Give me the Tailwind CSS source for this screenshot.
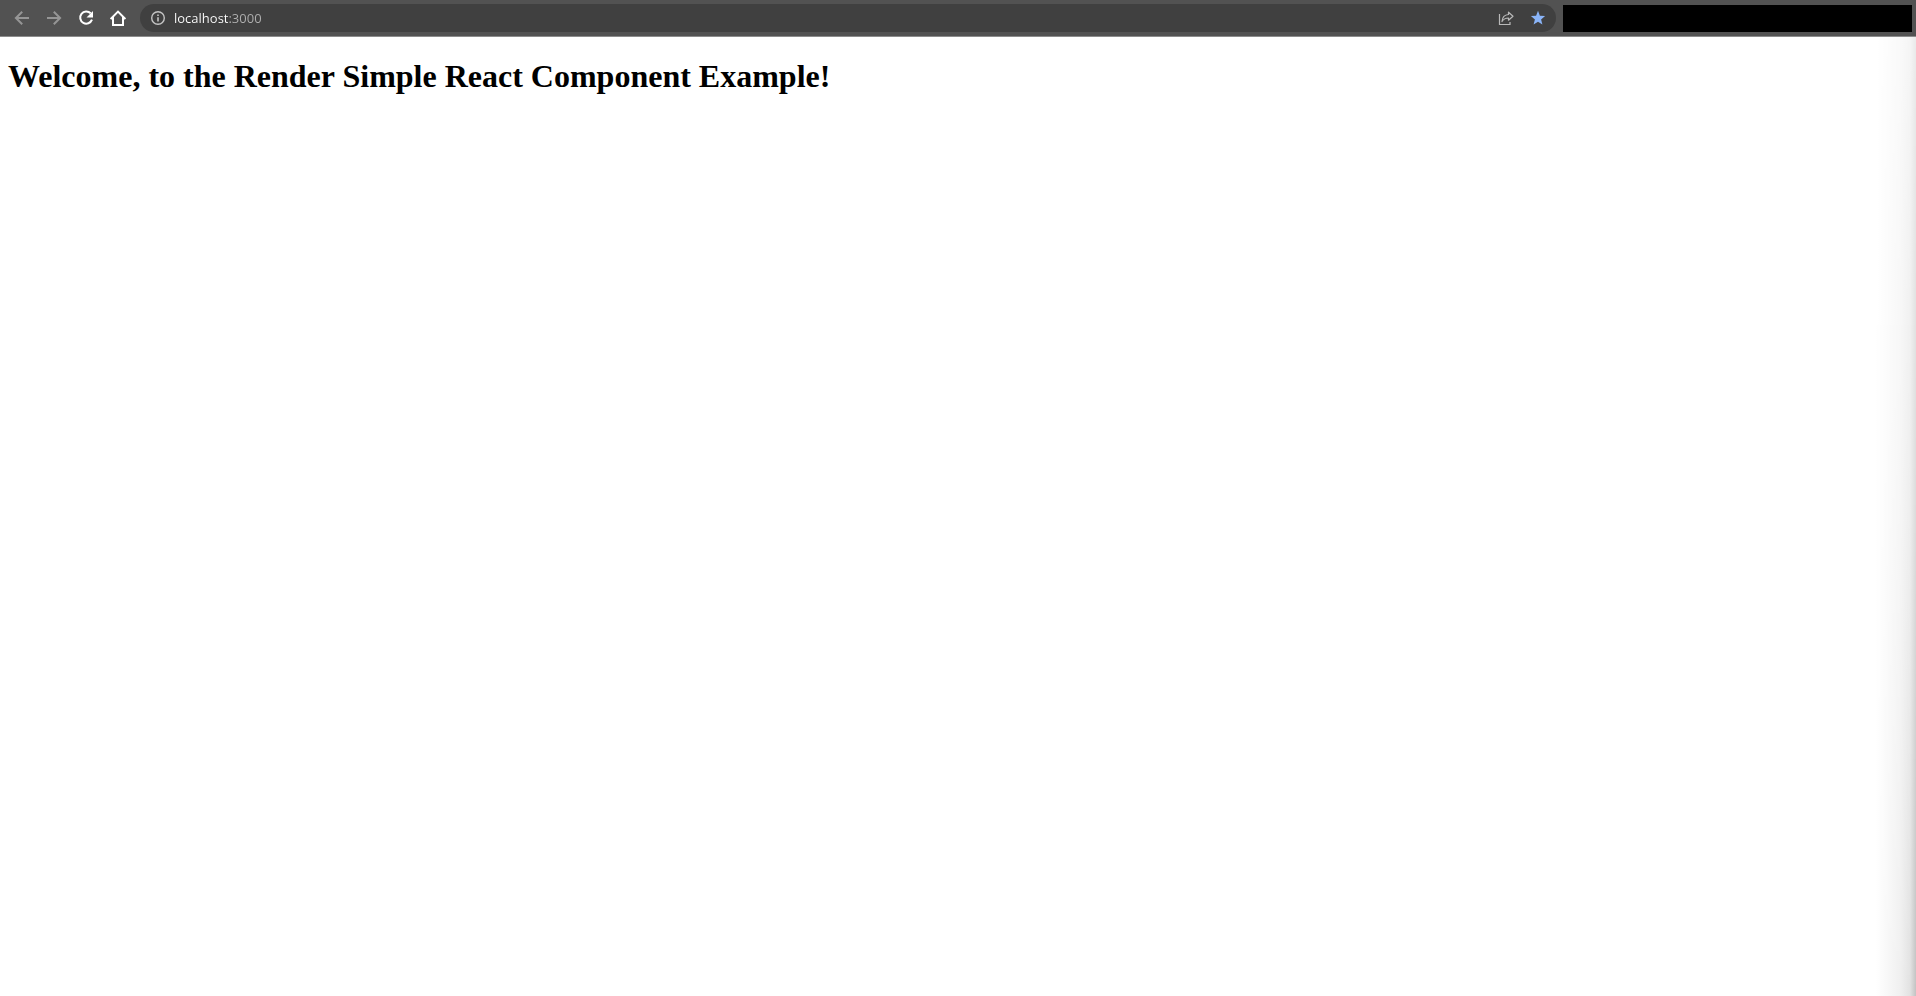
<!DOCTYPE html>
<html lang="en">
<head>
<meta charset="utf-8">
<meta name="viewport" content="width=device-width, initial-scale=1">
<title>Render Simple React Component</title>
<script src="https://cdn.jsdelivr.net/npm/@tailwindcss/browser@4"></script>
</head>
<body class="flex min-h-screen flex-col overflow-x-hidden bg-white">
  <header class="flex h-[37px] shrink-0 items-center border-b border-[#8c8c8c] bg-[#525252] pr-1 pl-1.5">
    <nav class="flex shrink-0" aria-label="Browser navigation">
      <button type="button" aria-label="Back" class="flex size-8 items-center justify-center text-[#959595]">
        <svg class="size-4" viewBox="0 0 16 16" fill="none" stroke="currentColor" stroke-width="2"><path d="M15 8H2.5M8.2 1.7L1.9 8l6.3 6.3"/></svg>
      </button>
      <button type="button" aria-label="Forward" class="flex size-8 items-center justify-center text-[#959595]">
        <svg class="size-4" viewBox="0 0 16 16" fill="none" stroke="currentColor" stroke-width="2"><path d="M1 8h12.5M7.8 1.7L14.1 8l-6.3 6.3"/></svg>
      </button>
      <button type="button" aria-label="Reload" class="flex size-8 items-center justify-center text-white">
        <svg class="size-4" viewBox="0 0 16 16"><path d="M12.700 3.300A6.100 6.100 0 1 0 14 9.700" fill="none" stroke="currentColor" stroke-width="2"/><path d="M15 1v6.500H8.500z" fill="currentColor"/></svg>
      </button>
      <button type="button" aria-label="Home" class="flex size-8 items-center justify-center text-white">
        <svg class="size-4" viewBox="0 0 16 16" fill="none" stroke="currentColor" stroke-width="2"><path d="M.6 9L8 1.600 15.400 9M3 7v8h10V7"/></svg>
      </button>
    </nav>
    <form class="ml-1.5 flex h-7 min-w-0 flex-1 items-center rounded-full bg-[#404040] pr-0.5 pl-2.5">
      <button type="button" aria-label="View site information" class="flex size-4 shrink-0 items-center justify-center text-[#c4c4c4]">
        <svg class="size-4" viewBox="0 0 16 16"><circle cx="8" cy="8" r="6.300" fill="none" stroke="currentColor" stroke-width="1.400"/><path d="M7.200 4.500h1.600V6H7.200zM7.200 7.200h1.600v4.300H7.200z" fill="currentColor"/></svg>
      </button>
      <input type="text" aria-label="Address" value="localhost:3000" class="ml-2 h-6 min-w-0 flex-1 bg-linear-to-r from-white from-[54px] to-[#b0b0b0] to-[54px] bg-clip-text font-['Open_Sans',sans-serif] text-[13px] text-transparent outline-none">
      <button type="button" aria-label="Share this page" class="flex size-8 shrink-0 items-center justify-center text-[#b9b9b9]">
        <svg class="size-4" viewBox="0 0 16 16" fill="none" stroke="currentColor" stroke-width="1.200"><path d="M1.500 4v10.500H12V12"/><path d="M10.500 2.200L15 6.200l-4.500 4V8C7.500 8 5.500 9 4 11.500 4.300 8 6 4.800 10.500 4.500z" stroke-linejoin="round"/></svg>
      </button>
      <button type="button" aria-label="Edit bookmark" class="flex size-8 shrink-0 items-center justify-center text-[#8ab4f8]">
        <svg class="size-4" viewBox="0 0 16 16" fill="currentColor"><path d="M8 .8l1.900 4.900 5.200.3-4 3.400 1.300 5.200L8 11.800l-4.400 2.800 1.300-5.200-4-3.400 5.200-.3z"/></svg>
      </button>
    </form>
    <div class="ml-[7px] h-[27px] w-[349px] shrink-0 bg-black"></div>
  </header>
  <main class="flex flex-1 justify-between pl-2">
    <h1 class="pt-[21px] font-['Liberation_Serif',serif] text-[32px] leading-9 font-bold text-black">Welcome, to the Render Simple React Component Example!</h1>
    <!-- Edge shadow, stronger towards the bottom -->
    <div class="w-10 shrink-0 bg-[linear-gradient(to_right,#fff,#f0f0f0_60%,#e2e2e2_85%,#c2c2c2)] [mask-image:linear-gradient(to_bottom,rgb(0_0_0/0.35),rgb(0_0_0/0.6)_50%,black)]"></div>
  </main>
</body>
</html>
